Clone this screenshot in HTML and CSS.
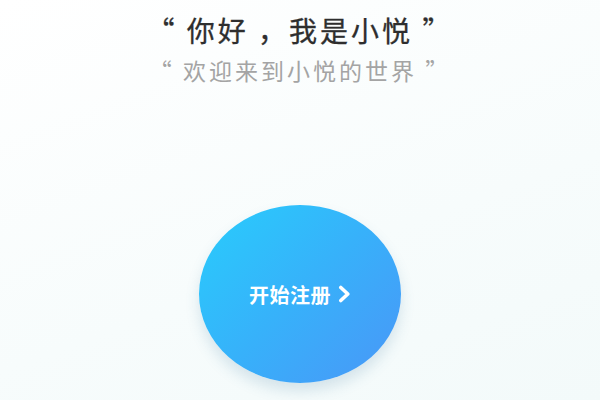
FILE: index.html
```html
<!DOCTYPE html>
<html lang="zh-CN">
<head>
  <meta charset="UTF-8">
  <meta name="viewport" content="width=device-width, initial-scale=1.0">
  <title>小悦</title>
  <link rel="stylesheet" href="styles.css">
</head>
<body>
  <div class="pagina">
    <div class="saudacao">
      <h1 class="titulo">“ 你好 ，我是小悦 ”</h1>
      <p class="subtitulo">“ 欢迎来到小悦的世界 ”</p>
    </div>
    <button class="registrar">
      <span>开始注册</span>
      <svg class="seta" width="13" height="18" viewBox="0 0 13 18">
        <path d="M2.8 2.5 L9.8 9 L2.8 15.5" fill="none" stroke="#fff" stroke-width="3.6" stroke-linecap="round" stroke-linejoin="round"/>
      </svg>
    </button>
  </div>
</body>
</html>
```

FILE: styles.css
```css
body {
    margin: 0;
    background: linear-gradient(160deg, #ffffff 0%, #f7fcfc 60%, #f3fafa 100%);
    font-family: "Noto Sans CJK SC", "Noto Sans", sans-serif;
    height: 400px;
    overflow: hidden;
}
.pagina {
    display: flex;
    flex-direction: column;
    align-items: center;
}
.saudacao {
    padding-top: 10px;
    text-align: center;
}
.titulo {
    margin: 0;
    font-size: 28px;
    font-weight: 400;
    letter-spacing: 3px;
    line-height: 40px;
    color: #2e2e2e;
    -webkit-text-stroke: 0.3px #2e2e2e;
}
.subtitulo {
    margin: 3px 0 0;
    font-size: 23px;
    letter-spacing: 3px;
    line-height: 34px;
    color: #a4a4a4;
}
.registrar {
    margin-top: 118px;
    width: 202px;
    height: 178px;
    border: none;
    border-radius: 50%;
    background: linear-gradient(135deg, #28cdfc 0%, #37b1fa 50%, #4a96f7 100%);
    box-shadow: 0 8px 14px rgba(60, 120, 160, 0.18);
    color: #fff;
    font-family: inherit;
    font-size: 20px;
    font-weight: 700;
    letter-spacing: 0.5px;
    display: flex;
    align-items: center;
    justify-content: center;
    gap: 7px;
    padding: 0;
}
.seta { display: block; }
```
